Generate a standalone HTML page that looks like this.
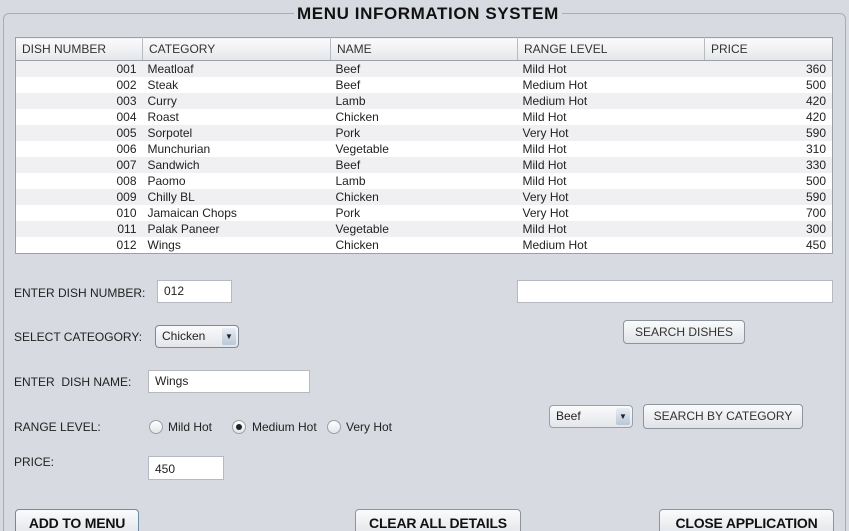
<!DOCTYPE html>
<html><head><meta charset="utf-8"><style>
*{margin:0;padding:0;box-sizing:border-box}
html,body{width:849px;height:531px;overflow:hidden}
body{background:#d7dae0;font-family:"Liberation Sans",sans-serif;font-size:12px;color:#222;position:relative}
.a{position:absolute}
.frame{left:3px;top:13px;width:843px;height:530px;border:1px solid #a9adb4;border-radius:6px}
.title{left:294px;top:4px;padding:0 3px;background:#d7dae0;font-weight:bold;font-size:17px;letter-spacing:0.6px;color:#111}
table{position:absolute;left:15px;top:37px;width:818px;border-collapse:collapse;border:1px solid #9aa0a8;background:#fff}
th{height:23px;font-weight:normal;text-align:left;padding-left:6px;background:linear-gradient(#fbfbfc,#e4e6ea);border-right:1px solid #b7bcc3;border-bottom:1px solid #9aa0a8;color:#333}
td{height:16px;line-height:16px;padding:0 6px 0 5px;color:#222}
tr:nth-child(even) td{background:#f0f0f2}
.r{text-align:right}
.inp{background:#fff;border:1px solid #b5bac1;height:23px;padding-left:6px;line-height:21px}
.lbl{color:#222}
.btn{border:1px solid #8d949c;border-radius:4px;background:linear-gradient(#fafbfc,#dfe2e7);text-align:center;color:#333}
.bb{font-weight:bold;font-size:14px;color:#111;letter-spacing:-0.2px}
.combo{border:1px solid #7f8790;border-radius:4px;background:linear-gradient(#fbfbfc,#e3e6ea);padding-left:6px}
.arr{position:absolute;right:2px;top:2px;width:14px;bottom:2px;border-radius:2px;background:linear-gradient(#e8eef5,#b9c7d6);font-size:8px;text-align:center;line-height:17px;color:#222}
.rad{width:14px;height:14px;border-radius:50%;border:1px solid #9aa0a8;background:linear-gradient(#fff,#e2e5e9)}
</style></head><body>
<div class="a frame"></div>
<div class="a title">MENU INFORMATION SYSTEM</div>
<table>
<tr><th style="width:127px">DISH NUMBER</th><th style="width:188px">CATEGORY</th><th style="width:187px">NAME</th><th style="width:187px">RANGE LEVEL</th><th style="border-right:none">PRICE</th></tr>
<tr><td class="r">001</td><td>Meatloaf</td><td>Beef</td><td>Mild Hot</td><td class="r">360</td></tr>
<tr><td class="r">002</td><td>Steak</td><td>Beef</td><td>Medium Hot</td><td class="r">500</td></tr>
<tr><td class="r">003</td><td>Curry</td><td>Lamb</td><td>Medium Hot</td><td class="r">420</td></tr>
<tr><td class="r">004</td><td>Roast</td><td>Chicken</td><td>Mild Hot</td><td class="r">420</td></tr>
<tr><td class="r">005</td><td>Sorpotel</td><td>Pork</td><td>Very Hot</td><td class="r">590</td></tr>
<tr><td class="r">006</td><td>Munchurian</td><td>Vegetable</td><td>Mild Hot</td><td class="r">310</td></tr>
<tr><td class="r">007</td><td>Sandwich</td><td>Beef</td><td>Mild Hot</td><td class="r">330</td></tr>
<tr><td class="r">008</td><td>Paomo</td><td>Lamb</td><td>Mild Hot</td><td class="r">500</td></tr>
<tr><td class="r">009</td><td>Chilly BL</td><td>Chicken</td><td>Very Hot</td><td class="r">590</td></tr>
<tr><td class="r">010</td><td>Jamaican Chops</td><td>Pork</td><td>Very Hot</td><td class="r">700</td></tr>
<tr><td class="r">011</td><td>Palak Paneer</td><td>Vegetable</td><td>Mild Hot</td><td class="r">300</td></tr>
<tr><td class="r">012</td><td>Wings</td><td>Chicken</td><td>Medium Hot</td><td class="r">450</td></tr>
</table>

<div class="a lbl" style="left:14px;top:286px">ENTER DISH NUMBER:</div>
<div class="a inp" style="left:157px;top:280px;width:75px">012</div>
<div class="a lbl" style="left:14px;top:330px">SELECT CATEOGORY:</div>
<div class="a combo" style="left:155px;top:325px;width:84px;height:23px;line-height:21px">Chicken<div class="arr">▼</div></div>
<div class="a lbl" style="left:14px;top:375px">ENTER&nbsp; DISH NAME:</div>
<div class="a inp" style="left:148px;top:370px;width:162px">Wings</div>
<div class="a lbl" style="left:14px;top:420px">RANGE LEVEL:</div>
<div class="a rad" style="left:149px;top:420px"></div>
<div class="a" style="left:168px;top:420px">Mild Hot</div>
<div class="a rad" style="left:232px;top:420px"><div style="width:6px;height:6px;border-radius:50%;background:#222;margin:3px"></div></div>
<div class="a" style="left:252px;top:420px">Medium Hot</div>
<div class="a rad" style="left:327px;top:420px"></div>
<div class="a" style="left:346px;top:420px">Very Hot</div>
<div class="a lbl" style="left:14px;top:455px">PRICE:</div>
<div class="a inp" style="left:148px;top:456px;width:76px;height:24px;line-height:24px">450</div>

<div class="a inp" style="left:517px;top:280px;width:316px"></div>
<div class="a btn" style="left:623px;top:320px;width:122px;height:24px;line-height:22px">SEARCH DISHES</div>
<div class="a combo" style="left:549px;top:405px;width:84px;height:23px;line-height:21px;border-color:#9aa0a8">Beef<div class="arr">▼</div></div>
<div class="a btn" style="left:643px;top:404px;width:160px;height:25px;line-height:23px">SEARCH BY CATEGORY</div>

<div class="a btn bb" style="left:15px;top:509px;width:124px;height:30px;line-height:27px;border-color:#6f8aa5">ADD TO MENU</div>
<div class="a btn bb" style="left:355px;top:509px;width:166px;height:30px;line-height:27px">CLEAR ALL DETAILS</div>
<div class="a btn bb" style="left:659px;top:509px;width:175px;height:30px;line-height:27px">CLOSE APPLICATION</div>
</body></html>
